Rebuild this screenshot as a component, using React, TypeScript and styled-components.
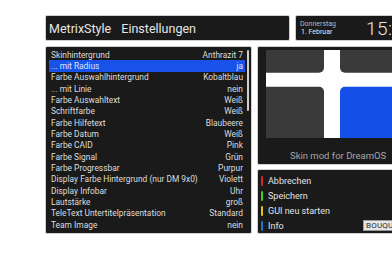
import React from "react";
import styled, { createGlobalStyle } from "styled-components";

const GlobalStyle = createGlobalStyle`
  html, body {
    margin: 0;
    padding: 0;
    background: #ffffff;
    overflow: hidden;
  }
  body {
    font-family: Roboto, "Liberation Sans", sans-serif;
  }
`;

const settings = [
  { label: "Skinhintergrund", value: "Anthrazit 7" },
  { label: "... mit Radius", value: "ja" },
  { label: "Farbe Auswahlhintergrund", value: "Kobaltblau" },
  { label: "... mit Linie", value: "nein" },
  { label: "Farbe Auswahltext", value: "Weiß" },
  { label: "Schriftfarbe", value: "Weiß" },
  { label: "Farbe Hilfetext", value: "Blaubeere" },
  { label: "Farbe Datum", value: "Weiß" },
  { label: "Farbe CAID", value: "Pink" },
  { label: "Farbe Signal", value: "Grün" },
  { label: "Farbe Progressbar", value: "Purpur" },
  { label: "Display Farbe Hintergrund (nur DM 9x0)", value: "Violett" },
  { label: "Display Infobar", value: "Uhr" },
  { label: "Lautstärke", value: "groß" },
  { label: "TeleText Untertitelpräsentation", value: "Standard" },
  { label: "Team Image", value: "nein" },
];

const keys = [
  { color: "#d8261c", label: "Abbrechen" },
  { color: "#3fcc1c", label: "Speichern" },
  { color: "#e2c514", label: "GUI neu starten" },
  { color: "#1d74d8", label: "Info" },
];

const Screen = styled.div`
  width: 560px;
  padding: 15px 0 0 45px;
  display: flex;
  flex-direction: column;
  gap: 5px;
`;

const TopRow = styled.div`
  display: flex;
  gap: 5px;
  height: 26px;
`;

const BodyRow = styled.div`
  display: flex;
  gap: 5px;
  height: 188px;
`;

const Panel = styled.div`
  box-sizing: border-box;
  background: #1a1a1a;
  border: 1px solid #cfcfcf;
  border-radius: 2px;
`;

const Header = styled(Panel)`
  width: 245px;
  display: flex;
  align-items: center;
  padding-left: 3px;
  color: #e6e6e6;
  font-size: 12.5px;
  word-spacing: 7px;
`;

const Clock = styled(Panel)`
  width: 200px;
  display: flex;
  align-items: center;
  padding-left: 4px;
`;

const DateBox = styled.div`
  display: flex;
  flex-direction: column;
  gap: 1px;
  width: 66px;
  font-size: 7px;
  line-height: 7px;
`;

const DateLine = styled.span<{ $dim?: boolean }>`
  color: ${(p) => (p.$dim ? "#b8b8b8" : "#e4e4e4")};
  padding-left: ${(p) => (p.$dim ? "0" : "1px")};
`;

const Time = styled.span`
  color: #e8e8e8;
  font-size: 19px;
  font-weight: 300;
  letter-spacing: 0.5px;
`;

const List = styled(Panel)`
  width: 207px;
  display: flex;
  padding: 2px 2px 0 3px;
  gap: 2px;
`;

const Rows = styled.div`
  flex: 1;
  display: flex;
  flex-direction: column;
`;

const Row = styled.div<{ $active?: boolean }>`
  height: 11.35px;
  display: flex;
  align-items: center;
  justify-content: space-between;
  padding: 0 2px 0 2px;
  font-size: 8.4px;
  color: ${(p) => (p.$active ? "#dfe7ff" : "#dedede")};
  background: ${(p) => (p.$active ? "#1852e8" : "transparent")};
`;

const ScrollTrack = styled.div`
  width: 2px;
  display: flex;
  flex-direction: column;
`;

const ScrollThumb = styled.div`
  margin-top: 1px;
  height: 61px;
  background: #cfcfcf;
  border-radius: 1px;
`;

const RightColumn = styled.div`
  width: 200px;
  display: flex;
  flex-direction: column;
  gap: 4px;
`;

const Preview = styled(Panel)`
  height: 120px;
  display: flex;
  flex-direction: column;
  padding: 3px 0 0 8px;
`;

const PreviewArt = styled.svg`
  display: block;
  width: 190px;
  height: 88px;
`;

const Caption = styled.div`
  width: 180px;
  margin-top: 12px;
  padding-left: 24px;
  font-size: 9.5px;
  color: #a8a8a8;
`;

const Keys = styled(Panel)`
  flex: 1;
  display: flex;
  flex-direction: column;
  padding: 3px 0 0 3px;
`;

const KeyRow = styled.div`
  height: 15px;
  display: flex;
  align-items: center;
  gap: 5px;
  font-size: 9px;
  color: #e2e2e2;
`;

const KeyBar = styled.span<{ $color: string }>`
  width: 2px;
  height: 10px;
  border-radius: 1px;
  background: ${(p) => p.$color};
`;

const KeyLabel = styled.span`
  width: 90px;
`;

const Bouquet = styled.span`
  display: inline-block;
  box-sizing: border-box;
  height: 11px;
  line-height: 9px;
  padding: 0 2px;
  background: #e6e6e6;
  border: 1px solid #9a9a9a;
  color: #2a2a2a;
  font-size: 8px;
  letter-spacing: 0.2px;
`;

export default function App() {
  return (
    <>
      <GlobalStyle />
      <Screen>
        <TopRow>
          <Header>MetrixStyle Einstellungen</Header>
          <Clock>
            <DateBox>
              <DateLine $dim>Donnerstag</DateLine>
              <DateLine>1. Februar</DateLine>
            </DateBox>
            <Time>15:42</Time>
          </Clock>
        </TopRow>
        <BodyRow>
          <List>
            <Rows>
              {settings.map((s, i) => (
                <Row key={s.label} $active={i === 1}>
                  <span>{s.label}</span>
                  <span>{s.value}</span>
                </Row>
              ))}
            </Rows>
            <ScrollTrack>
              <ScrollThumb />
            </ScrollTrack>
          </List>
          <RightColumn>
            <Preview>
              <PreviewArt viewBox="0 0 190 88">
                <rect x="0" y="0" width="190" height="88" fill="#ffffff" />
                <rect x="-10" y="-10" width="68" height="32.7" rx="5" fill="#3a3a3a" />
                <rect x="74" y="-10" width="130" height="32.7" rx="5" fill="#3a3a3a" />
                <rect x="-10" y="36.7" width="68" height="62" rx="5" fill="#3a3a3a" />
                <rect x="74" y="36.7" width="130" height="62" rx="5" fill="#1450e8" />
              </PreviewArt>
              <Caption>Skin mod for DreamOS</Caption>
            </Preview>
            <Keys>
              {keys.map((k) => (
                <KeyRow key={k.label}>
                  <KeyBar $color={k.color} />
                  <KeyLabel>{k.label}</KeyLabel>
                  {k.label === "Info" && <Bouquet>BOUQUET</Bouquet>}
                </KeyRow>
              ))}
            </Keys>
          </RightColumn>
        </BodyRow>
      </Screen>
    </>
  );
}
